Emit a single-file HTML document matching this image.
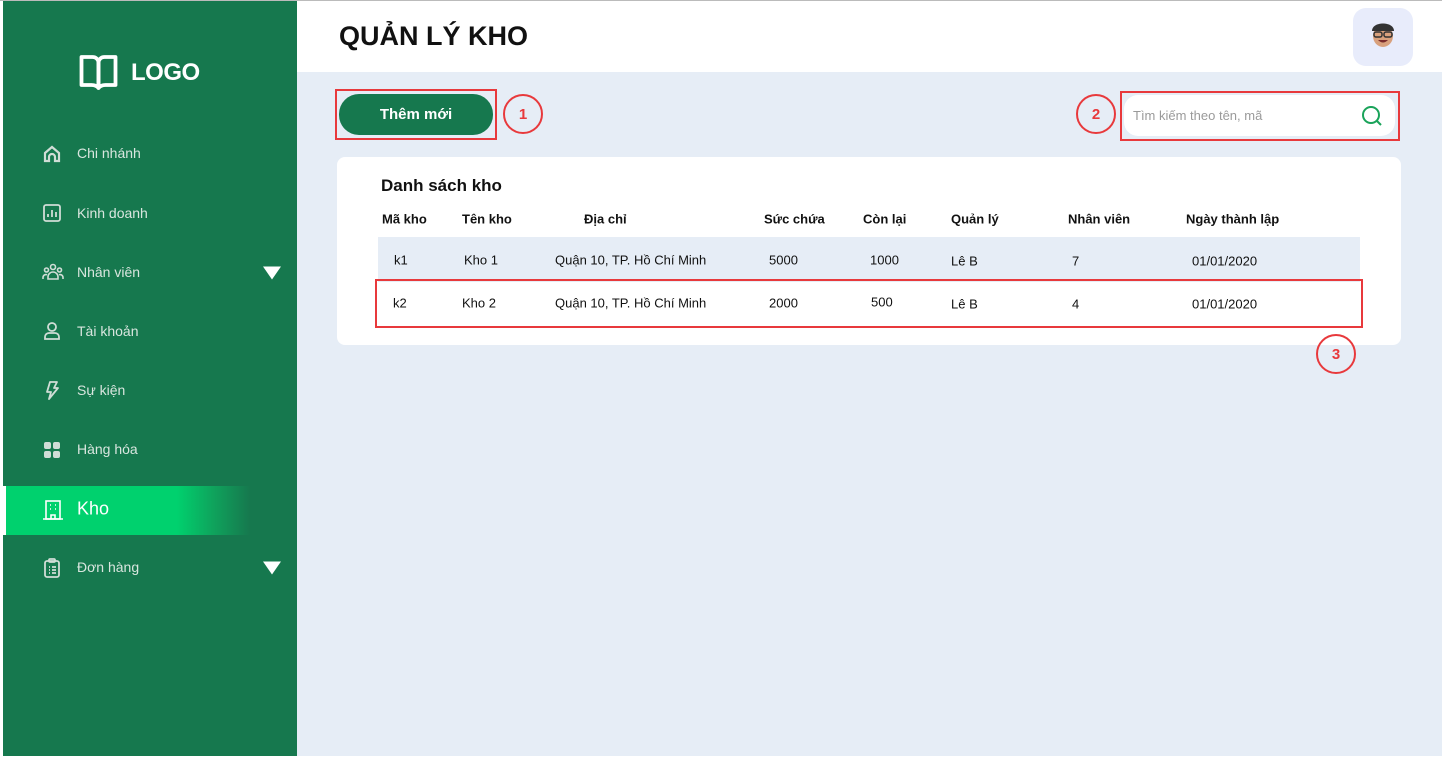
<!DOCTYPE html>
<html><head><meta charset="utf-8"><style>
*{margin:0;padding:0;box-sizing:border-box}
body{width:1442px;height:758px;position:relative;background:#fff;font-family:"Liberation Sans",sans-serif;overflow:hidden}
.a{position:absolute}
.sb{left:3px;top:1px;width:294px;height:755px;background:#16784e}
.nav{position:absolute;left:77px;font-size:14px;color:#d9e6df;transform:translateY(-50%);white-space:nowrap}
.ic{position:absolute;left:42px;width:20px;height:20px;transform:translateY(-50%)}
.tri{position:absolute;left:263px;width:0;height:0;border-left:9px solid transparent;border-right:9px solid transparent;border-top:13px solid #fff;transform:translateY(-50%)}
.main{left:297px;top:72px;width:1145px;height:684px;background:#e6edf6}
.th{position:absolute;top:219px;transform:translateY(-50%);font-size:13px;font-weight:bold;color:#111;white-space:nowrap}
.td{position:absolute;transform:translateY(-50%);font-size:13px;color:#111;white-space:nowrap}
.circ{position:absolute;width:40px;height:40px;border:2px solid #e8393c;border-radius:50%;color:#e8393c;font-weight:bold;font-size:15px;display:flex;align-items:center;justify-content:center}
.rbox{position:absolute;border:2px solid #e8393c}
</style></head><body>
<div class="a" style="left:0;top:0;width:1442px;height:1px;background:#bbb"></div>
<div class="a sb"></div>
<!-- logo -->
<svg class="a" style="left:79px;top:54px" width="39" height="37" viewBox="0 0 39 37" fill="none" stroke="#fff" stroke-width="3.8" stroke-linejoin="round"><path d="M2.5 3h11c3.5 0 6 2.5 6 6v25c-2-2.5-4-3-7-3h-10z"/><path d="M36.5 3h-11c-3.5 0-6 2.5-6 6v25c2-2.5 4-3 7-3h10z"/></svg>
<div class="a" style="left:131px;top:59px;font-size:24px;font-weight:bold;color:#fff;letter-spacing:-0.5px">LOGO</div>

<svg class="ic" style="top:154px" viewBox="0 0 20 20" fill="none" stroke="#d0ddd6" stroke-width="2.2"><path d="M3 9l7-6 7 6v8h-4v-4a3 3 0 0 0-6 0v4H3z"/></svg>
<div class="nav" style="top:153px">Chi nhánh</div>
<svg class="ic" style="top:213px" viewBox="0 0 20 20" fill="none" stroke="#d0ddd6" stroke-width="1.8"><rect x="2" y="2" width="16" height="16" rx="2"/><path d="M6 14v-3M10 14V7M14 14V9"/></svg>
<div class="nav" style="top:213px">Kinh doanh</div>
<svg class="ic" style="top:272px;width:22px" viewBox="0 0 22 20" fill="none" stroke="#d0ddd6" stroke-width="1.6"><circle cx="11" cy="5" r="2.5"/><circle cx="4.5" cy="8" r="2"/><circle cx="17.5" cy="8" r="2"/><path d="M6 17v-2a5 5 0 0 1 10 0v2zM1 17v-1.5a3 3 0 0 1 4-2.8M21 17v-1.5a3 3 0 0 0-4-2.8"/></svg>
<div class="nav" style="top:272px">Nhân viên</div>
<div class="tri" style="top:273px"></div>
<svg class="ic" style="top:331px" viewBox="0 0 20 20" fill="none" stroke="#d0ddd6" stroke-width="1.8"><circle cx="10" cy="6" r="4"/><path d="M3 18v-2a4 4 0 0 1 4-4h6a4 4 0 0 1 4 4v2z"/></svg>
<div class="nav" style="top:331px">Tài khoản</div>
<svg class="ic" style="top:390px" viewBox="0 0 20 20" fill="none" stroke="#d0ddd6" stroke-width="1.8" stroke-linejoin="round"><path d="M8 2h7l-3 6h4L7 19l2-7H5z"/></svg>
<div class="nav" style="top:390px">Sự kiện</div>
<svg class="ic" style="top:450px" viewBox="0 0 20 20" fill="#d0ddd6"><rect x="2" y="2" width="7" height="7" rx="2"/><rect x="11" y="2" width="7" height="7" rx="2"/><rect x="2" y="11" width="7" height="7" rx="2"/><rect x="11" y="11" width="7" height="7" rx="2"/></svg>
<div class="nav" style="top:449px">Hàng hóa</div>
<div class="a" style="left:3px;top:486px;width:3px;height:49px;background:#fff"></div>
<div class="a" style="left:6px;top:486px;width:244px;height:49px;background:linear-gradient(90deg,#00d16e 0%,#00d16e 70%,#0fa35c 85%,#16784e 100%)"></div>
<svg class="ic" style="top:510px;width:22px;height:22px" viewBox="0 0 22 22" fill="none" stroke="#fff" stroke-width="1.6"><rect x="4" y="2" width="14" height="18"/><path d="M1 20h20M9 20v-4h4v4M8 6h1M13 6h1M8 10h1M13 10h1"/></svg>
<div class="nav" style="top:509px;font-size:18px;color:#fff">Kho</div>
<svg class="ic" style="top:568px" viewBox="0 0 20 20" fill="none" stroke="#d0ddd6" stroke-width="1.8"><rect x="3" y="3" width="14" height="16" rx="2"/><rect x="7" y="1" width="6" height="3" rx="1"/><path d="M7 9h1M10 9h4M7 12h1M10 12h4M7 15h1M10 15h4"/></svg>
<div class="nav" style="top:567px">Đơn hàng</div>
<div class="tri" style="top:568px"></div>

<!-- header -->
<div class="a" style="left:339px;top:21px;font-size:27px;font-weight:bold;color:#111">QUẢN LÝ KHO</div>
<div class="a" style="left:1353px;top:8px;width:60px;height:58px;background:#e8ecfb;border-radius:13px"></div>
<svg class="a" style="left:1369px;top:18px" width="28" height="30" viewBox="0 0 28 30"><ellipse cx="14" cy="18" rx="10" ry="11" fill="#d8a07c"/><path d="M3 13c0-10 22-10 22 0z" fill="#333"/><rect x="5" y="14" width="8" height="5" rx="2" fill="none" stroke="#333" stroke-width="1.5"/><rect x="15" y="14" width="8" height="5" rx="2" fill="none" stroke="#333" stroke-width="1.5"/><path d="M9 22q5 5 10 0z" fill="#7a2b2b"/></svg>

<div class="a main"></div>
<!-- button -->
<div class="a" style="left:339px;top:94px;width:154px;height:41px;background:#16784e;border-radius:20px;color:#fff;font-weight:bold;font-size:15px;display:flex;align-items:center;justify-content:center">Thêm mới</div>
<div class="rbox" style="left:335px;top:89px;width:162px;height:51px"></div>
<div class="circ" style="left:503px;top:94px">1</div>
<div class="circ" style="left:1076px;top:94px">2</div>
<div class="a" style="left:1124px;top:95px;width:271px;height:41px;background:#fff;border-radius:14px"></div>
<div class="a" style="left:1133px;top:108px;font-size:13px;color:#9a9a9a">Tìm kiếm theo tên, mã</div>
<svg class="a" style="left:1360px;top:104px" width="24" height="24" viewBox="0 0 24 24" fill="none" stroke="#1aa35a" stroke-width="2"><circle cx="11" cy="11" r="8"/><path d="M17 17l4 4"/></svg>
<div class="rbox" style="left:1120px;top:91px;width:280px;height:50px"></div>

<!-- card -->
<div class="a" style="left:337px;top:157px;width:1064px;height:188px;background:#fff;border-radius:8px"></div>
<div class="a" style="left:381px;top:176px;font-size:17px;font-weight:bold;color:#111">Danh sách kho</div>
<div class="th" style="left:382px">Mã kho</div>
<div class="th" style="left:462px">Tên kho</div>
<div class="th" style="left:584px">Địa chỉ</div>
<div class="th" style="left:764px">Sức chứa</div>
<div class="th" style="left:863px">Còn lại</div>
<div class="th" style="left:951px">Quản lý</div>
<div class="th" style="left:1068px">Nhân viên</div>
<div class="th" style="left:1186px">Ngày thành lập</div>
<div class="a" style="left:378px;top:237px;width:982px;height:45px;background:#e6edf6"></div>
<div class="td" style="top:260px;left:394px">k1</div>
<div class="td" style="top:260px;left:464px">Kho 1</div>
<div class="td" style="top:260px;left:555px">Quận 10, TP. Hồ Chí Minh</div>
<div class="td" style="top:260px;left:769px">5000</div>
<div class="td" style="top:260px;left:870px">1000</div>
<div class="td" style="top:261px;left:951px">Lê B</div>
<div class="td" style="top:261px;left:1072px">7</div>
<div class="td" style="top:261px;left:1192px">01/01/2020</div>
<div class="td" style="top:303px;left:393px">k2</div>
<div class="td" style="top:303px;left:462px">Kho 2</div>
<div class="td" style="top:303px;left:555px">Quận 10, TP. Hồ Chí Minh</div>
<div class="td" style="top:303px;left:769px">2000</div>
<div class="td" style="top:302px;left:871px">500</div>
<div class="td" style="top:304px;left:951px">Lê B</div>
<div class="td" style="top:304px;left:1072px">4</div>
<div class="td" style="top:304px;left:1192px">01/01/2020</div>
<div class="rbox" style="left:375px;top:279px;width:988px;height:49px"></div>
<div class="circ" style="left:1316px;top:334px">3</div>
</body></html>
